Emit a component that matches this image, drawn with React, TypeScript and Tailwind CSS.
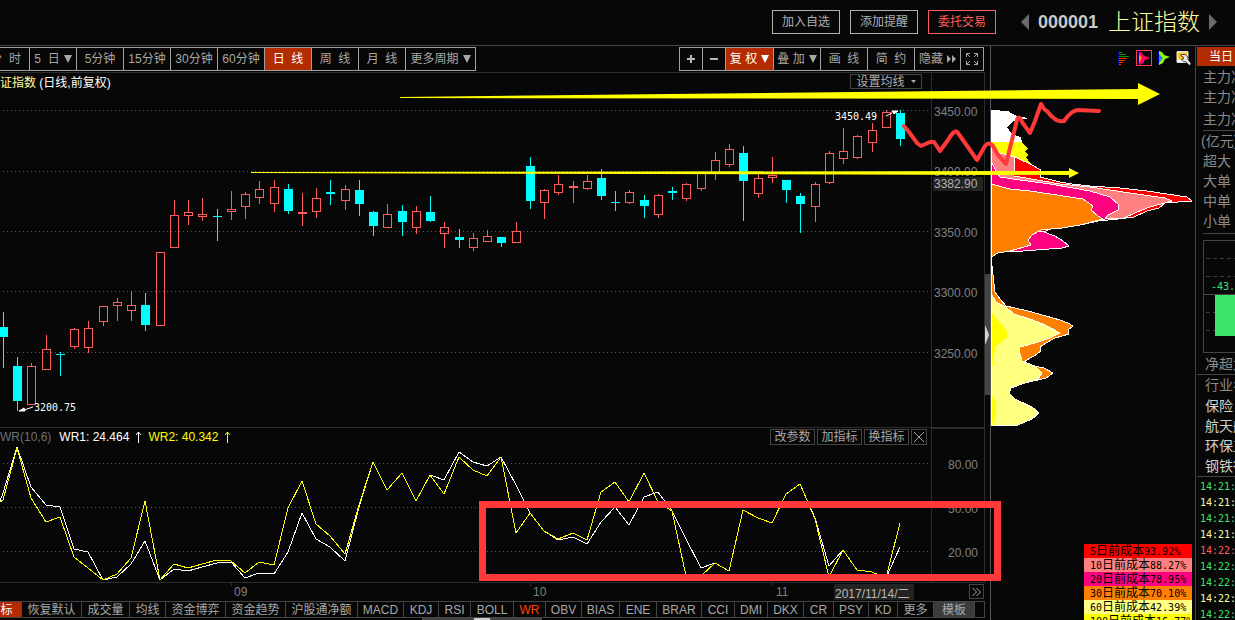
import clsx from 'clsx';

type Candle = [high: number, top: number, bottom: number, low: number, rising: 0 | 1];

const STEP = 14.238;
const xAt = (i: number) => 3 + Math.round(i * STEP);

const candles: Candle[] = [
  [312, 327, 337, 368, 0], [357, 366, 401, 411, 0], [363, 366, 405, 405, 1], [335, 349, 370, 370, 1],
  [352, 354, 355, 376, 0], [328, 329, 347, 349, 1], [321, 328, 348, 353, 1], [306, 306, 322, 326, 1],
  [298, 302, 306, 321, 1], [291, 305, 311, 321, 1], [293, 305, 325, 331, 0], [252, 252, 326, 326, 1],
  [200, 215, 248, 248, 1], [200, 212, 216, 225, 1], [198, 214, 217, 221, 1], [209, 216, 217, 241, 0],
  [191, 209, 212, 220, 1], [192, 194, 207, 219, 1], [181, 189, 198, 204, 1], [180, 187, 204, 212, 1],
  [184, 189, 211, 214, 0], [193, 212, 214, 226, 1], [188, 198, 212, 218, 1], [180, 192, 194, 205, 0],
  [185, 189, 201, 210, 1], [180, 190, 204, 216, 0], [211, 212, 226, 236, 0], [204, 214, 228, 228, 1],
  [205, 211, 222, 236, 0], [206, 211, 228, 234, 1], [196, 212, 221, 222, 0], [222, 227, 234, 248, 1],
  [229, 237, 240, 248, 0], [233, 238, 248, 251, 1], [230, 236, 242, 242, 1], [237, 237, 243, 247, 0],
  [222, 231, 243, 243, 1], [157, 166, 201, 209, 0], [189, 190, 203, 219, 1], [175, 184, 193, 195, 1],
  [181, 186, 188, 203, 1], [175, 181, 189, 190, 1], [169, 178, 196, 200, 0], [191, 202, 203, 211, 0],
  [190, 192, 203, 204, 1], [195, 200, 206, 218, 0], [194, 195, 215, 218, 1], [187, 191, 193, 200, 0],
  [183, 184, 199, 201, 1], [173, 173, 189, 191, 1], [152, 160, 173, 180, 1], [144, 149, 165, 167, 1],
  [146, 153, 181, 221, 0], [174, 178, 194, 198, 1], [157, 175, 178, 183, 1], [180, 180, 190, 203, 0],
  [193, 196, 204, 233, 0], [182, 184, 207, 222, 1], [151, 153, 183, 184, 1], [128, 151, 159, 164, 1],
  [135, 136, 158, 159, 1], [123, 130, 143, 152, 1], [110, 112, 128, 128, 1], [110, 113, 139, 146, 0],
];

const wr1 = [
  493, 447, 487, 505, 507, 549, 552, 580, 577, 564, 541, 580, 569, 571, 567, 563,
  562, 578, 573, 574, 552, 513, 539, 547, 561, 507, 462, 490, 473, 501, 475, 480,
  452, 462, 466, 457, 485, 513, 531, 540, 537, 544, 522, 507, 525, 497, 492, 511,
  539, 568, 563, 571, 510, 518, 523, 494, 484, 518, 566, 550, 570, 572, 578, 547,
];
const wr2 = [
  500, 448, 498, 522, 517, 557, 568, 580, 574, 558, 501, 580, 564, 568, 564, 560,
  561, 573, 562, 565, 508, 481, 524, 536, 554, 505, 462, 490, 473, 501, 475, 494,
  457, 470, 476, 457, 533, 513, 531, 539, 533, 540, 492, 482, 502, 473, 502, 511,
  576, 576, 563, 571, 510, 518, 523, 494, 484, 519, 577, 550, 570, 572, 578, 523,
];

const linePoints = (start: number, ys: number[]) =>
  [`0,${start}`, ...ys.map((y, i) => `${xAt(i)},${y}`)].join(' ');

const periods = [
  { label: '5\u00a0\u00a0日', menu: true },
  { label: '5分钟' },
  { label: '15分钟' },
  { label: '30分钟' },
  { label: '60分钟' },
  { label: '日\u00a0\u00a0线', active: true },
  { label: '周\u00a0\u00a0线' },
  { label: '月\u00a0\u00a0线' },
  { label: '更多周期', menu: true },
];

const indicators = [
  '标', '恢复默认', '成交量', '均线', '资金博弈', '资金趋势', '沪股通净额', 'MACD', 'KDJ', 'RSI', 'BOLL', 'WR',
  'OBV', 'BIAS', 'ENE', 'BRAR', 'CCI', 'DMI', 'DKX', 'CR', 'PSY', 'KD', '更多', '模板',
];

const costs = [
  { days: 5, value: '93.92%', bg: 'bg-[#ff0000]' },
  { days: 10, value: '88.27%', bg: 'bg-[#ff8080]' },
  { days: 20, value: '78.95%', bg: 'bg-[#ff0080]' },
  { days: 30, value: '70.10%', bg: 'bg-[#ff8000]' },
  { days: 60, value: '42.39%', bg: 'bg-[#ffff80]' },
  { days: 100, value: '16.77%', bg: 'bg-[#ffff00]' },
];

const ticks = [
  { time: '14:21:', color: 'text-[#3de66b]' },
  { time: '14:21:', color: 'text-[#ffffa0]' },
  { time: '14:21:', color: 'text-[#3de66b]' },
  { time: '14:21:', color: 'text-[#ffffa0]' },
  { time: '14:22:', color: 'text-[#ff5c5c]' },
  { time: '14:22:', color: 'text-[#3de66b]' },
  { time: '14:22:', color: 'text-[#3de66b]' },
  { time: '14:22:', color: 'text-[#ffffa0]' },
  { time: '14:22:', color: 'text-[#3de66b]' },
];

function GridLine({ y }: { y: number }) {
  return <line x1="3" x2="100%" y1={y + 0.5} y2={y + 0.5} stroke="#5a5a5a" strokeDasharray="1 3" />;
}

function Caret() {
  return <svg className="size-2" viewBox="0 0 8 8"><path d="M0 0h8L4 8z" fill="currentColor" /></svg>;
}

function Header() {
  const button = 'h-6 w-[68px] border text-xs leading-none';
  return (
    <header className="flex h-[46px] shrink-0 items-center justify-end border-b border-[#444] pr-[17px] pb-px">
      <div className="flex gap-2.5">
        <button className={clsx(button, 'border-[#b0b0b0] text-[#b0b0b0]')}>加入自选</button>
        <button className={clsx(button, 'border-[#b0b0b0] text-[#b0b0b0]')}>添加提醒</button>
        <button className={clsx(button, 'border-[#ff5c5c] text-[#ff5c5c]')}>委托交易</button>
      </div>
      <div className="ml-6 flex items-center">
        <button aria-label="上一只">
          <svg className="block h-4 w-2.5" viewBox="0 0 10 16"><path d="M9 0v16L1 8z" fill="#6b6b6b" /></svg>
        </button>
        <span className="ml-2 text-lg font-bold leading-6 text-[#c8c8c8]">000001</span>
        <h1 className="ml-2.5 text-[23px] font-light leading-6 text-[#ffffa0]">上证指数</h1>
        <button aria-label="下一只" className="ml-2">
          <svg className="block h-4 w-2.5" viewBox="0 0 10 16"><path d="M1 0v16l8-8z" fill="#6b6b6b" /></svg>
        </button>
      </div>
    </header>
  );
}

function Toolbar() {
  const cell = 'flex items-center justify-center overflow-hidden whitespace-nowrap border-r border-[#a0a0a0]';
  return (
    <div className="flex h-[27px] shrink-0 justify-between border-b border-[#2c2c2c] pt-px pr-px text-xs text-[#a8a8a8]">
      <div className="grid h-6 grid-cols-[30px_repeat(8,47px)_70px] border-y border-[#a0a0a0]">
        <button className={clsx(cell, 'justify-end pr-2')}>分&nbsp;&nbsp;时</button>
        {periods.map(({ label, menu, active }) => (
          <button key={label} className={clsx(cell, menu && 'gap-1', active && 'bg-[#b32b00] text-white')}>
            {label}
            {menu && <Caret />}
          </button>
        ))}
      </div>
      <div className="grid h-6 grid-cols-[23px_23px_48px_47px_47px_47px_46px_23px] border-y border-l border-[#a0a0a0]">
        <button className={cell} aria-label="放大">
          <svg className="size-2" viewBox="0 0 8 8"><path d="M3 0h2v3h3v2H5v3H3V5H0V3h3z" fill="#b8b8b8" /></svg>
        </button>
        <button className={cell} aria-label="缩小">
          <svg className="size-2" viewBox="0 0 8 8"><path d="M0 3h8v2H0z" fill="#b8b8b8" /></svg>
        </button>
        <button className={clsx(cell, 'gap-1 bg-[#b32b00] text-white')}>复&nbsp;权<Caret /></button>
        <button className={clsx(cell, 'gap-1')}>叠&nbsp;加<Caret /></button>
        <button className={cell}>画&nbsp;&nbsp;线</button>
        <button className={cell}>简&nbsp;&nbsp;约</button>
        <button className={clsx(cell, 'gap-1')}>
          隐藏
          <svg className="h-2 w-[9px]" viewBox="0 0 9 8"><path d="M0 0l4 4-4 4zM5 0l4 4-4 4z" fill="#a8a8a8" /></svg>
        </button>
        <button className={cell} aria-label="全屏">
          <svg className="size-3" viewBox="0 0 12 12" fill="none" stroke="#a8a8a8">
            <path d="M.5 4V.5H4M8 .5h3.500V4M11.500 8v3.500H8M4 11.500H.5V8M1 1l3 3M11 1L8 4M11 11L8 8M1 11l3-3" />
          </svg>
        </button>
      </div>
    </div>
  );
}

function PricePane() {
  return (
    <section className="flex h-[355px] shrink-0 border-b border-[#2c2c2c]">
      <div className="relative min-w-0 flex-1 overflow-hidden">
        <svg className="absolute inset-0 h-full w-full">
          <g transform="translate(0 -73)">
            {[110, 171, 231, 291, 352].map((y) => <GridLine key={y} y={y} />)}
            {candles.map(([high, top, bottom, low, rising], i) => {
              const x = xAt(i);
              const color = rising ? '#ff5c5c' : '#00ffff';
              return (
                <g key={i}>
                  {high < top && <rect x={x} y={high} width="1" height={top - high} fill={color} />}
                  {low > bottom && <rect x={x} y={bottom} width="1" height={low - bottom} fill={color} />}
                  {rising
                    ? <rect x={x - 3.5} y={top + 0.5} width="8" height={bottom - top - 1} fill="none" stroke={color} />
                    : <rect x={x - 4} y={top} width="9" height={bottom - top} fill={color} />}
                </g>
              );
            })}
            <g fill="#fff" stroke="none" className="font-['DejaVu_Sans_Mono',monospace] text-[10px]">
              <text x="835" y="120">3450.49</text>
              <text x="34" y="411">3200.75</text>
            </g>
            <g fill="#fff" stroke="#fff">
              <path d="M886 116l6-3" />
              <path d="M892 111h6l-4 3z" />
              <path d="M33 407l-9 3" />
              <path d="M19 411l5-3 1 3z" />
            </g>
          </g>
        </svg>
        <div className="relative flex items-start justify-between pt-px pr-[9px]">
          <h2 className="-ml-3 text-xs leading-[18px] text-white">
            <span className="text-[#ffffa0]">上证指数</span> (日线,前复权)
          </h2>
          <button className="flex h-[15px] w-[72px] items-center justify-center gap-1.5 border border-[#444] text-xs leading-none text-[#b0b0b0]">
            设置均线
            <svg className="h-[3px] w-[5px]" viewBox="0 0 5 3"><path d="M0 0h5L2.500 3z" fill="#b0b0b0" /></svg>
          </button>
        </div>
      </div>
      <svg className="h-full w-[54px] shrink-0 border-x border-[#2c2c2c] text-xs" fill="#808080">
        <g transform="translate(0 -73)">
          <text x="2" y="116">3450.00</text>
          <text x="2" y="176">3400.00</text>
          <rect x="1" y="177" width="50" height="14" fill="#232323" />
          <text x="2" y="188" fill="#b0b0b0">3382.90</text>
          <text x="2" y="237">3350.00</text>
          <text x="2" y="297">3300.00</text>
          <text x="2" y="358">3250.00</text>
        </g>
      </svg>
    </section>
  );
}

function UpArrow({ color }: { color: string }) {
  return (
    <svg className="mx-[7px] h-3 w-[5px]" viewBox="0 0 5 12" fill="none" stroke={color}>
      <path d="M2.500 12V1M0 4l2.500-3L5 4" />
    </svg>
  );
}

function WrPane() {
  const small = 'h-4 border border-[#444] text-xs leading-none text-[#a8a8a8]';
  return (
    <section className="flex h-[155px] shrink-0 border-b border-[#2c2c2c]">
      <div className="relative min-w-0 flex-1 overflow-hidden">
        <svg className="absolute inset-0 h-full w-full" shapeRendering="crispEdges" fill="none">
          <g transform="translate(0 -428)">
            {[463, 507, 551].map((y) => <GridLine key={y} y={y} />)}
            <polyline points={linePoints(501, wr1)} stroke="#fff" />
            <polyline points={linePoints(502, wr2)} stroke="#ff0" />
          </g>
        </svg>
        <div className="relative flex items-start justify-between pt-px pr-1">
          <div className="flex items-center whitespace-nowrap text-xs leading-4">
            <span className="mr-2 text-[#707070]">WR(10,6)</span>
            <span className="text-white">WR1: 24.464</span>
            <UpArrow color="#fff" />
            <span className="text-[#ff0]">WR2: 40.342</span>
            <UpArrow color="#ff0" />
          </div>
          <div className="flex gap-0.5">
            <button className={clsx(small, 'w-[45px]')}>改参数</button>
            <button className={clsx(small, 'w-[45px]')}>加指标</button>
            <button className={clsx(small, 'w-[45px]')}>换指标</button>
            <button className={clsx(small, 'flex w-4 items-center justify-center')} aria-label="关闭">
              <svg className="size-2.5" viewBox="0 0 10 10" stroke="#a8a8a8"><path d="M0 0l10 10M10 0L0 10" /></svg>
            </button>
          </div>
        </div>
      </div>
      <svg className="h-full w-[54px] shrink-0 border border-b-0 border-[#2c2c2c] text-xs" fill="#808080">
        <g transform="translate(0 -429)">
          <text x="16" y="469">80.00</text>
          <text x="16" y="513">50.00</text>
          <text x="16" y="557">20.00</text>
        </g>
      </svg>
    </section>
  );
}

function DateAxis() {
  return (
    <div className="flex h-[18px] shrink-0">
      <svg className="h-full min-w-0 flex-1 text-xs" fill="#808080">
        <path d="M231.500 0v3M530.500 0v3M772.500 0v3" stroke="#2c2c2c" />
        <text x="234" y="13">09</text>
        <text x="533" y="13">10</text>
        <text x="776" y="13">11</text>
        <rect x="834" y="1" width="80" height="16" fill="#232323" />
        <text x="835" y="15" fill="#b8b8b8">2017/11/14/二</text>
      </svg>
      <button className="mt-px mr-px flex size-[15px] items-center justify-center border border-[#444]" aria-label="展开">
        <svg className="h-2 w-[9px]" viewBox="0 0 9 8" fill="none" stroke="#a8a8a8"><path d="M.5 0l4 4-4 4M4.500 0l4 4-4 4" /></svg>
      </button>
    </div>
  );
}

function IndicatorTabs() {
  return (
    <>
      <nav className="grid h-[17px] shrink-0 grid-cols-[22px_60px_48px_36px_60px_60px_72px_46px_35px_32px_43px_32px_36px_38px_37px_45px_33px_33px_36px_30px_35px_29px_36px_41px_10px] border-y border-[#444] text-xs text-[#a8a8a8]">
        {indicators.map((name) => (
          <button
            key={name}
            className={clsx(
              'flex items-center justify-center whitespace-nowrap border-r border-[#444] pt-px leading-[14px]',
              name === '标' && 'bg-[#b32b00] pr-2 text-white',
              name === 'WR' && 'text-[#ff4500]',
              name === '模板' && 'bg-[#3c3c3c]',
            )}
          >
            {name}
          </button>
        ))}
        <span className="border-r border-[#444]" />
      </nav>
      <div className="flex flex-1 bg-black pl-[422px]">
        <div className="flex h-1 w-[120px] justify-center bg-[#444]">
          <div className="w-4 bg-[#d0d0d0]" />
        </div>
      </div>
    </>
  );
}

function ChipIcons() {
  return (
    <div className="flex h-6 shrink-0 items-center justify-end gap-1.5 pr-1">
      <button aria-label="筹码分布">
        <svg className="block h-3.5 w-3" viewBox="0 0 12 14">
          <path d="M.5 0v14" stroke="#000090" />
          <path d="M1 1.500h3M1 3.500h7M1 5.500h10" stroke="#009000" />
          <path d="M1 7.500h8M1 9.500h6M1 11.500h4M1 13.500h2" stroke="#ff3000" />
        </svg>
      </button>
      <button aria-label="远期移动成本" className="border border-[#ff4040]">
        <svg className="block size-3.5" viewBox="0 0 14 14">
          <path d="M1.500 0v14" stroke="#000090" />
          <path d="M2 1l2 0 2 3 7 3-5 2-2 3-4 2z" fill="#ff0060" />
          <path d="M2 3l3 4-3 5z" fill="#ff9000" />
        </svg>
      </button>
      <button aria-label="近期移动成本">
        <svg className="block h-3.5 w-3" viewBox="0 0 12 14">
          <path d="M.5 0v14" stroke="#0000b0" />
          <path d="M1 0l3 1 2 3 6 2-5 2-2 4-4 2z" fill="#90ff00" />
          <path d="M1 3l4 4-4 5z" fill="#3080ff" />
        </svg>
      </button>
      <button aria-label="设置">
        <svg className="block h-4 w-[15px]" viewBox="0 0 15 16">
          <path d="M1 1.500h11v11H1z" fill="#fff" stroke="#d8d8d8" />
          <path d="M2 2.500h9v7H2z" fill="#ffc020" />
          <path d="M5 4.500h4l3 2.500v2.500l3 4-1.500 2-4-4H7.500L5 9.500l2.500-.5V7L5 6z" fill="#e8e8e8" stroke="#303030" strokeWidth=".8" />
        </svg>
      </button>
    </div>
  );
}

function ChipPane() {
  return (
    <section className="flex w-[205px] shrink-0 flex-col overflow-hidden border-l border-[#555]">
      <ChipIcons />
      <svg className="h-[360px] w-full shrink-0" shapeRendering="crispEdges">
        <g transform="translate(-991 -70)">
          <polygon fill="#fff" points="991,110 1008,111 1013,114 1019,117 1030,118 1013,121 1011,124 1007,127 1012,134 1017,136 1021,137 1022,142 991,142" />
          <polygon fill="#ff0" points="991,142 1022,142 1024,145 1028,148 1025,152 1028,155 1026,157 1031,164 1014,158 1000,154 991,148" />
          <g stroke="#fff">
            <polygon fill="#f00" points="991,147 1000,153 1015,157 1030,164 1041,170 1040,177 1060,182 1072,184 1090,186 1120,188 1147,191 1187,197 1192,201 1165,203 1159,208 1147,211 1134,217 1118,219 1098,221 1080,225 1050,229 1044,232 1040,233 991,233" />
            <polygon fill="#ff8080" points="991,147 1000,153 1015,157 1014,176 1060,184 1090,187 1130,193 1165,198 1172,201 1150,207 1137,212 1124,218 1105,219 991,222" />
            <polygon fill="#ff0080" points="991,161 997,173 1000,177 1020,180 1050,184 1090,191 1110,197 1119,205 1118,210 1108,215 1105,219 1080,222 991,222" />
            <polygon fill="#ff0080" points="1041,231 1055,236 1063,241 1069,246 1062,248 1010,252 1000,250 1020,232" />
            <polygon fill="#ff8000" points="991,184 1010,189 1030,191 1050,194 1083,199 1093,206 1091,210 1098,216 1103,219 1080,225 1062,228 1041,230 1032,235 1028,240 1031,245 1010,251 998,253 991,257" />
            <polygon fill="#ff8000" points="991,257 992,266 993,275 995,292 1000,299 1006,306 1028,311 1046,316 1060,320 1068,323 1073,326 1068,330 1069,334 1055,338 1046,343 1040,347 1041,351 1034,356 1025,361 1029,365 1044,368 1053,373 1046,378 1025,383 1011,388 1009,393 1015,399 1032,407 1039,413 1032,419 1018,425 991,425" />
            <polygon fill="#ffff80" points="991,293 996,302 1006,307 1014,314 1030,319 1045,325 1060,333 1050,338 1035,343 1020,347 1019,350 1022,361 1035,366 1042,373 1038,379 1025,383 1011,388 1009,393 1015,399 1032,407 1039,413 1032,419 1018,425 991,425" />
          </g>
          <polygon fill="#ff0" stroke="#ffff80" points="991,310 1000,322 1008,332 1007,338 996,347 994,360 992,372 992,394 996,402 996,416 993,425 991,425" />
          <path d="M991.500 110v315" stroke="#fff" />
        </g>
      </svg>
      <ul className="mt-auto mr-[3px] h-[76px] w-[108px] self-end overflow-hidden font-['DejaVu_Sans_Mono','Noto_Sans_CJK_SC',monospace] text-[10px] leading-[14px] text-black">
        {costs.map(({ days, value, bg }) => (
          <li key={days} className={clsx('h-3.5 overflow-hidden whitespace-nowrap pl-1.5', bg)}>
            {days}<span className="text-xs leading-[14px]">日前成本</span>{value}
          </li>
        ))}
      </ul>
    </section>
  );
}

function Sidebar() {
  return (
    <aside className="flex w-10 shrink-0 flex-col overflow-hidden whitespace-nowrap border-l border-[#444] pl-px text-sm leading-5 text-[#8a8a8a]">
      <button className="mt-px h-[19px] shrink-0 bg-[#b32b00] pl-3 text-left text-xs text-white">当日</button>
      <div className="shrink-0 pt-px pb-px pl-1.5">
        <p>主力净</p>
        <p>主力净</p>
        <p className="pt-0.5">主力净</p>
      </div>
      <div className="ml-1.5 h-px shrink-0 bg-[#444]" />
      <div className="shrink-0 pl-1.5">
        <p className="-ml-0.5">(亿元)</p>
        <p>超大</p>
        <p>大单</p>
        <p>中单</p>
        <p>小单</p>
      </div>
      <div className="mt-0.5 ml-1.5 h-px shrink-0 bg-[#444]" />
      <svg className="mt-1.5 ml-1.5 h-[113px] w-20 shrink-0" shapeRendering="crispEdges">
        <path d="M80 .5H.5v112H80M0 54.500h80" stroke="#444" fill="none" />
        <path d="M3 18.500h80M3 36.500h80M3 72.500h80M3 90.500h80" stroke="#3a3a3a" strokeDasharray="4 3" />
        <rect x="12" y="55" width="68" height="41" fill="#3de66b" />
        <text x="8" y="50" fill="#3de66b" className="font-['DejaVu_Sans_Mono',monospace] text-[10px]">-43.</text>
      </svg>
      <p className="mt-px shrink-0 border-b border-[#444] pl-2">净超大</p>
      <div className="shrink-0 border-b border-[#444] pl-2 text-[#d0d0d0]">
        <p className="pb-px text-[#8a8a8a]">行业名</p>
        <p>保险</p>
        <p>航天航空</p>
        <p>环保工程</p>
        <p>钢铁行业</p>
      </div>
      <ul className="pt-0.5 pl-[3px] font-['DejaVu_Sans_Mono',monospace] text-[10px] leading-4">
        {ticks.map(({ time, color }, i) => <li key={i} className={color}>{time}</li>)}
      </ul>
    </aside>
  );
}

// hand-drawn marks, on top of every pane
function Annotations() {
  return (
    <svg className="pointer-events-none absolute inset-0 h-full w-full">
      <g fill="#ff0">
        <polygon points="400,97 1138,89 1138,83 1160,94 1138,105 1138,99 400,98" />
        <polygon points="251,172 1069,171 1069,168 1079,173 1069,178 1069,175 251,173" />
      </g>
      <g fill="none" stroke="#ff3939">
        <rect x="482.5" y="504.5" width="515" height="73" strokeWidth="7" />
        <path
          d="M904 126l5 6 8 11 4 3 9-4h4l6 9 8-11q7-12 10-7l19 27 8-14q4-5 8 0l5 9 8 9 4-16 7-28q2-6 5 2l8 11 5-12 6-17q4 7 6 7 9 12 17 10 8-11 14-11l21 1"
          strokeWidth="4" strokeLinecap="round" strokeLinejoin="round"
        />
      </g>
    </svg>
  );
}

export default function App() {
  return (
    <div className="relative flex h-screen flex-col overflow-hidden bg-[#070707] font-['Liberation_Sans','Noto_Sans_CJK_SC',sans-serif]">
      <Header />
      <main className="flex min-h-0 flex-1">
        <div className="flex min-w-0 flex-1">
          <div className="flex min-w-0 flex-1 flex-col">
            <Toolbar />
            <PricePane />
            <WrPane />
            <DateAxis />
            <IndicatorTabs />
          </div>
          <div className="w-[5px] shrink-0 pt-[228px]">
            <button className="flex h-[121px] w-full items-center bg-[#444]" aria-label="收起筹码">
              <svg className="h-5 w-1" viewBox="0 0 4 20"><path d="M0 0l3 7 1 3-1 3-3 7z" fill="#d0d0d0" /></svg>
            </button>
          </div>
        </div>
        <ChipPane />
        <Sidebar />
      </main>
      <Annotations />
    </div>
  );
}
